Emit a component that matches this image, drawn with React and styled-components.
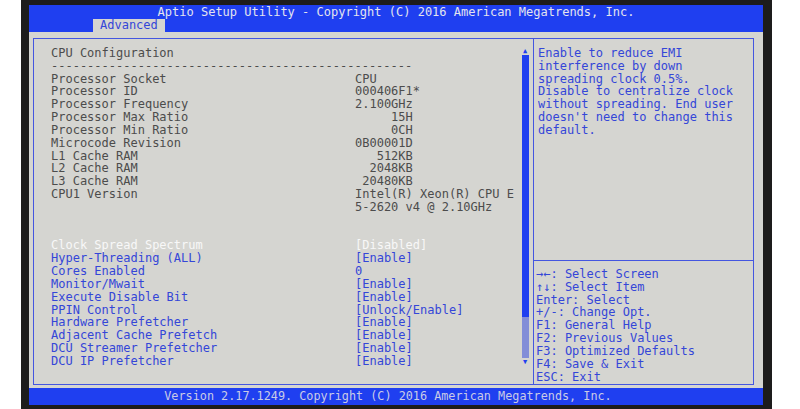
import React from "react";
import styled, { createGlobalStyle } from "styled-components";

const colors = {
  bezel: "#1d1c1c",
  blue: "#1f3ff0",
  line: "#4456e0",
  gray: "#d5d5d1",
  info: "#4c4c4c",
  option: "#3446d8",
  selected: "#f8f8f8",
  headerText: "#e4e4ee",
};

const GlobalStyle = createGlobalStyle`
  html, body {
    margin: 0;
    padding: 0;
    background: #ffffff;
  }
  * {
    box-sizing: border-box;
  }
`;

const Page = styled.div`
  width: 800px;
  height: 409px;
  display: flex;
  padding: 0 28px 0 21px;
  background: #ffffff;
  font-family: "DejaVu Sans Mono", "Liberation Mono", monospace;
  font-size: 12px;
`;

const Bezel = styled.div`
  flex: 1;
  display: flex;
  padding: 5px 9px 4px 8px;
  background: ${colors.bezel};
`;

const Screen = styled.div`
  flex: 1;
  display: flex;
  flex-direction: column;
  background: ${colors.gray};
`;

const Header = styled.div`
  height: 27px;
  display: flex;
  flex-direction: column;
  background: ${colors.blue};
`;

const Title = styled.div`
  height: 14px;
  line-height: 14px;
  text-align: center;
  color: ${colors.headerText};
  white-space: pre;
`;

const TabRow = styled.div`
  flex: 1;
  display: flex;
  padding-left: 64px;
`;

const Tab = styled.div`
  width: 72px;
  line-height: 13px;
  padding-left: 7px;
  background: ${colors.gray};
  color: ${colors.option};
`;

const Body = styled.div`
  flex: 1;
  display: flex;
  padding: 6px 9px 3px 4px;
`;

const Panel = styled.div`
  flex: 1;
  display: grid;
  grid-template-columns: 500px 1fr;
  border: 1px solid ${colors.line};
`;

const Main = styled.div`
  display: flex;
  border-right: 1px solid ${colors.line};
`;

const List = styled.div`
  flex: 1;
  padding: 8px 0 0 17px;
`;

const Row = styled.div`
  display: grid;
  grid-template-columns: 304px 1fr;
  height: 12.83px;
  line-height: 12.83px;
  white-space: pre;
  color: ${(p) => (p.$selected ? colors.selected : p.$option ? colors.option : colors.info)};
`;

const Spacer = styled.div`
  height: ${(p) => p.$lines * 12.83}px;
`;

const Scrollbar = styled.div`
  width: 8px;
  margin: 8px 4px 18px 0;
  display: flex;
  flex-direction: column;
  align-items: center;
  color: ${colors.blue};
  font-size: 7px;
  line-height: 8px;
`;

const Thumb = styled.div`
  width: 7px;
  height: 262px;
  background: ${colors.blue};
`;

const Track = styled.div`
  flex: 1;
  width: 7px;
  background-color: #c8cad8;
  background-image: radial-gradient(circle, #7d89d8 0.7px, transparent 0.8px);
  background-size: 2px 2px;
`;

const Side = styled.div`
  display: flex;
  flex-direction: column;
`;

const Help = styled.div`
  flex: 1;
  padding: 8px 0 0 4px;
  color: ${colors.option};
`;

const Keys = styled.div`
  height: 124px;
  padding: 7px 0 0 2px;
  border-top: 1px solid ${colors.line};
  color: ${colors.option};
`;

const Line = styled.div`
  height: 12.83px;
  line-height: 12.83px;
  white-space: pre;
`;

const Footer = styled.div`
  height: 17px;
  line-height: 17px;
  padding-right: 16px;
  text-align: center;
  background: ${colors.blue};
  color: #c9cbe6;
  font-size: 11.8px;
  white-space: pre;
`;

const info = [
  ["Processor Socket", "CPU"],
  ["Processor ID", "000406F1*"],
  ["Processor Frequency", "2.100GHz"],
  ["Processor Max Ratio", "     15H"],
  ["Processor Min Ratio", "     0CH"],
  ["Microcode Revision", "0B00001D"],
  ["L1 Cache RAM", "   512KB"],
  ["L2 Cache RAM", "  2048KB"],
  ["L3 Cache RAM", " 20480KB"],
  ["CPU1 Version", "Intel(R) Xeon(R) CPU E"],
  ["", "5-2620 v4 @ 2.10GHz"],
];

const options = [
  ["Clock Spread Spectrum", "[Disabled]"],
  ["Hyper-Threading (ALL)", "[Enable]"],
  ["Cores Enabled", "0"],
  ["Monitor/Mwait", "[Enable]"],
  ["Execute Disable Bit", "[Enable]"],
  ["PPIN Control", "[Unlock/Enable]"],
  ["Hardware Prefetcher", "[Enable]"],
  ["Adjacent Cache Prefetch", "[Enable]"],
  ["DCU Streamer Prefetcher", "[Enable]"],
  ["DCU IP Prefetcher", "[Enable]"],
];

const helpText = [
  "Enable to reduce EMI",
  "interference by down",
  "spreading clock 0.5%.",
  "Disable to centralize clock",
  "without spreading. End user",
  "doesn't need to change this",
  "default.",
];

const keyHelp = [
  "\u2192\u2190: Select Screen",
  "\u2191\u2193: Select Item",
  "Enter: Select",
  "+/-: Change Opt.",
  "F1: General Help",
  "F2: Previous Values",
  "F3: Optimized Defaults",
  "F4: Save & Exit",
  "ESC: Exit",
];

export default function App() {
  return (
    <Page>
      <GlobalStyle />
      <Bezel>
        <Screen>
          <Header>
            <Title>Aptio Setup Utility - Copyright (C) 2016 American Megatrends, Inc.</Title>
            <TabRow>
              <Tab>Advanced</Tab>
            </TabRow>
          </Header>
          <Body>
            <Panel>
              <Main>
                <List>
                  <Row>
                    <span>CPU Configuration</span>
                  </Row>
                  <Row>
                    <span>{"-".repeat(50)}</span>
                  </Row>
                  {info.map(([label, value], i) => (
                    <Row key={i}>
                      <span>{label}</span>
                      <span>{value}</span>
                    </Row>
                  ))}
                  <Spacer $lines={2} />
                  {options.map(([label, value], i) => (
                    <Row key={label} $option $selected={i === 0}>
                      <span>{label}</span>
                      <span>{value}</span>
                    </Row>
                  ))}
                </List>
                <Scrollbar>
                  <span>{"\u25B2"}</span>
                  <Thumb />
                  <Track />
                  <span>{"\u25BC"}</span>
                </Scrollbar>
              </Main>
              <Side>
                <Help>
                  {helpText.map((t) => (
                    <Line key={t}>{t}</Line>
                  ))}
                </Help>
                <Keys>
                  {keyHelp.map((t) => (
                    <Line key={t}>{t}</Line>
                  ))}
                </Keys>
              </Side>
            </Panel>
          </Body>
          <Footer>Version 2.17.1249. Copyright (C) 2016 American Megatrends, Inc.</Footer>
        </Screen>
      </Bezel>
    </Page>
  );
}
